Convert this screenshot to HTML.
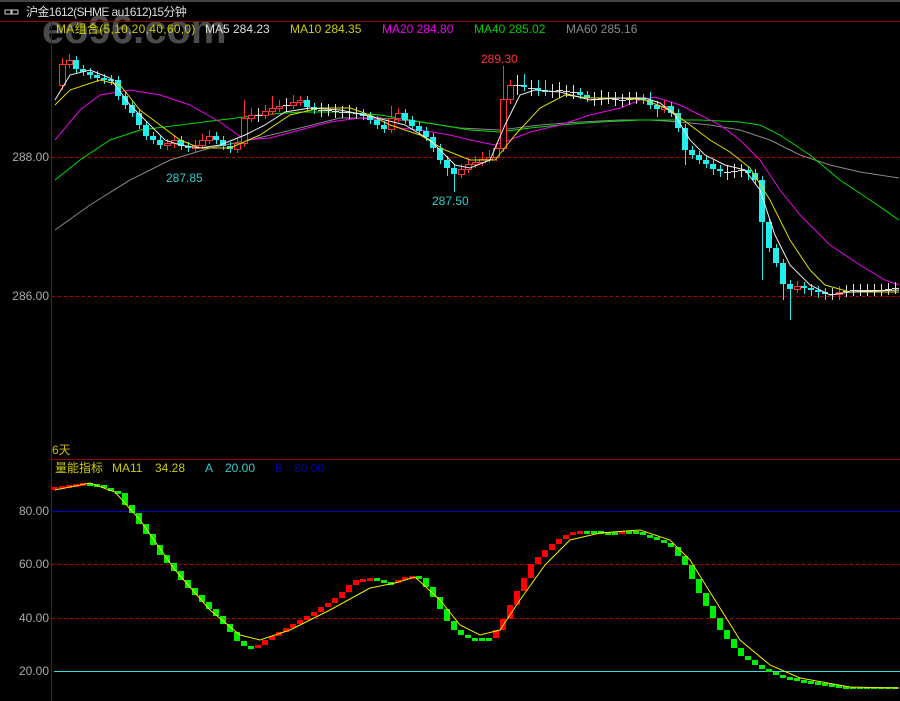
<!DOCTYPE html>
<html><head><meta charset="utf-8"><style>
body{margin:0;background:#000;width:900px;height:701px;overflow:hidden;font-family:"Liberation Sans","Noto Sans CJK SC",sans-serif;}
.t{position:absolute;white-space:nowrap;font-size:12px;line-height:14px}
</style></head><body>
<div style="position:absolute;left:0;top:0;width:900px;height:2px;background:#444"></div>
<div class="t" style="left:42px;top:10px;font-size:40px;line-height:40px;color:#4a4a4a;font-weight:bold">eo96.com</div>
<svg width="900" height="701" style="position:absolute;left:0;top:0">
<g stroke="#ccc" fill="none"><rect x="5" y="10" width="6" height="4"/><rect x="12" y="10" width="6" height="4"/></g>
<line x1="0" y1="21.5" x2="900" y2="21.5" stroke="#900"/>
<line x1="51.5" y1="21" x2="51.5" y2="701" stroke="#900"/>
<line x1="52" y1="459.5" x2="900" y2="459.5" stroke="#900"/>
<g stroke="#a00" stroke-dasharray="3,3"><line x1="52" y1="157.5" x2="900" y2="157.5"/><line x1="52" y1="296.5" x2="900" y2="296.5"/><line x1="52" y1="564.5" x2="900" y2="564.5"/><line x1="52" y1="618.5" x2="900" y2="618.5"/></g>
<line x1="52" y1="511.5" x2="900" y2="511.5" stroke="#0000c0"/>
<line x1="54" y1="671.5" x2="900" y2="671.5" stroke="#33dddd"/>
<g fill="none" stroke-width="1">
<polyline stroke="#888" points="55,230 90,205 130,180 170,160 210,148 250,140 300,128 340,118 380,118 420,122 460,128 500,130 540,125 580,122 620,120 650,120 680,122 710,125 740,130 770,140 800,155 830,165 860,172 899,178"/>
<polyline stroke="#0d0" points="55,180 80,160 110,140 140,130 180,125 220,120 260,115 300,112 340,112 380,115 410,120 440,125 470,130 500,132 530,128 560,125 600,122 640,120 670,120 700,120 740,122 760,125 780,135 810,155 840,180 870,200 899,220"/>
<polyline stroke="#e0e" points="55,140 80,110 100,95 130,90 160,95 190,105 220,122 245,140 270,138 300,130 330,122 360,118 380,120 400,128 420,130 450,135 470,140 495,145 510,140 530,132 560,125 590,115 620,108 640,100 655,97 680,105 700,115 720,125 740,140 760,160 780,190 800,215 830,245 860,265 885,280 899,285"/>
</g>
<path fill="none" stroke="#2ee" d="M76.5 56V73M83.5 65V76M90.5 68V79M97.5 71V82M104.5 74V84M111.5 75V85M118.5 76V100M125.5 92V109M132.5 101V117M139.5 109V129M146.5 121V140M153.5 132V144M160.5 136V149M181.5 136V150M188.5 142V152M216.5 132V144M223.5 136V150M230.5 142V153M307.5 96V111M314.5 103V114M363.5 109V120M370.5 112V124M377.5 116V129M384.5 121V133M405.5 109V124M412.5 116V130M419.5 122V135M426.5 127V141M433.5 133V152M440.5 144V164M447.5 156V176M454.5 164V192M524.5 74V91M538.5 80V96M545.5 80V96M580.5 88V99M587.5 91V102M643.5 94V104M650.5 92V109M657.5 101V117M671.5 102V117M678.5 109V132M685.5 124V165M692.5 146V159M699.5 151V164M706.5 156V168M713.5 160V175M720.5 165V177M748.5 166V180M755.5 169V184M762.5 176V280M769.5 218V252M776.5 244V267M783.5 259V300M790.5 280V320M804.5 282V294M811.5 284V296M818.5 286V298M825.5 288V300"/>
<path fill="#2ee" d="M73 60h6v9h-6zM80 69h6v3h-6zM87 72h6v3h-6zM94 75h6v3h-6zM101 78h6v2h-6zM108 79h6v2h-6zM115 80h6v16h-6zM122 96h6v9h-6zM129 105h6v8h-6zM136 113h6v12h-6zM143 125h6v11h-6zM150 136h6v4h-6zM157 140h6v5h-6zM178 140h6v6h-6zM185 146h6v2h-6zM213 136h6v4h-6zM220 140h6v6h-6zM227 146h6v3h-6zM304 100h6v7h-6zM311 107h6v3h-6zM360 113h6v3h-6zM367 116h6v4h-6zM374 120h6v5h-6zM381 125h6v4h-6zM402 113h6v7h-6zM409 120h6v6h-6zM416 126h6v5h-6zM423 131h6v6h-6zM430 137h6v11h-6zM437 148h6v12h-6zM444 160h6v8h-6zM451 168h6v6h-6zM521 85h6v2h-6zM535 88h6v2h-6zM542 90h6v2h-6zM577 92h6v3h-6zM584 95h6v3h-6zM640 98h6v2h-6zM647 100h6v5h-6zM654 105h6v4h-6zM668 106h6v7h-6zM675 113h6v15h-6zM682 128h6v22h-6zM689 150h6v5h-6zM696 155h6v5h-6zM703 160h6v4h-6zM710 164h6v5h-6zM717 169h6v2h-6zM745 170h6v3h-6zM752 173h6v7h-6zM759 180h6v42h-6zM766 222h6v26h-6zM773 248h6v15h-6zM780 263h6v21h-6zM787 284h6v5h-6zM801 286h6v2h-6zM808 288h6v2h-6zM815 290h6v2h-6zM822 292h6v2h-6z"/>
<path fill="none" stroke="#f33" d="M62.5 58V90M69.5 54V68M167.5 139V150M174.5 135V148M195.5 140V152M202.5 134V149M209.5 130V144M237.5 138V153M244.5 100V147M251.5 108V122M265.5 105V119M272.5 96V115M279.5 100V112M293.5 95V109M300.5 96V106M391.5 106V133M398.5 108V122M461.5 164V178M468.5 158V173M475.5 156V168M482.5 152V166M489.5 150V163M496.5 143V161M503.5 66V152M510.5 80V104M664.5 100V113M797.5 281V293M839.5 286V300"/>
<path fill="#000" stroke="#f33" d="M59.5 64.5h6v21h-6zM66.5 60.5h6v4h-6zM164.5 143.5h6v2h-6zM171.5 140.5h6v3h-6zM192.5 145.5h6v3h-6zM199.5 140.5h6v5h-6zM206.5 136.5h6v4h-6zM234.5 143.5h6v6h-6zM241.5 118.5h6v25h-6zM248.5 115.5h6v3h-6zM262.5 111.5h6v4h-6zM269.5 108.5h6v3h-6zM276.5 106.5h6v2h-6zM290.5 102.5h6v3h-6zM297.5 100.5h6v2h-6zM388.5 118.5h6v11h-6zM395.5 113.5h6v5h-6zM458.5 169.5h6v5h-6zM465.5 164.5h6v5h-6zM472.5 162.5h6v2h-6zM479.5 159.5h6v3h-6zM486.5 157.5h6v2h-6zM493.5 148.5h6v9h-6zM500.5 99.5h6v49h-6zM507.5 85.5h6v14h-6zM661.5 106.5h6v3h-6zM794.5 286.5h6v3h-6zM836.5 292.5h6v2h-6z"/>
<path fill="none" stroke="#ddd" d="M258.5 108V122M255 115.5h7M286.5 98V112M283 105.5h7M321.5 103V117M318 110.5h7M328.5 104V116M325 110.5h7M335.5 104V118M332 111.5h7M342.5 106V118M339 112.5h7M349.5 105V119M346 112.5h7M356.5 107V119M353 113.5h7M517.5 75V95M514 85.5h7M531.5 80V96M528 88.5h7M552.5 84V98M549 91.5h7M559.5 82V98M556 90.5h7M566.5 85V97M563 91.5h7M573.5 85V99M570 92.5h7M594.5 92V106M591 99.5h7M601.5 90V105M598 98.5h7M608.5 92V104M605 98.5h7M615.5 92V106M612 99.5h7M622.5 94V107M619 100.5h7M629.5 92V105M626 99.5h7M636.5 92V104M633 98.5h7M727.5 165V180M724 172.5h7M734.5 164V178M731 171.5h7M741.5 164V177M738 170.5h7M832.5 288V300M829 294.5h7M846.5 285V297M843 291.5h7M853.5 284V296M850 290.5h7M860.5 284V296M857 290.5h7M867.5 284V296M864 290.5h7M874.5 284V296M871 290.5h7M881.5 284V296M878 290.5h7M888.5 283V295M885 289.5h7M895.5 282V294M892 288.5h7"/>
<g fill="none" stroke-width="1">
<polyline stroke="#dd0" points="55,105 70,90 100,80 120,85 140,110 160,125 180,140 200,148 230,148 260,135 290,115 320,108 350,108 370,115 390,125 420,135 445,150 470,160 495,160 515,135 540,108 565,95 590,98 620,98 645,100 670,110 690,125 710,140 730,152 750,168 770,200 790,240 810,270 825,285 850,292 899,292"/>
<polyline stroke="#eee" points="55,100 70,75 90,70 110,78 130,105 150,125 165,140 180,145 200,148 220,145 245,135 265,125 285,112 310,108 340,110 365,115 385,120 405,125 430,140 455,165 470,168 490,160 505,125 520,95 535,90 560,92 590,100 620,98 645,98 660,103 675,115 690,140 705,155 725,165 745,170 760,190 775,235 790,265 810,285 830,295 850,292 899,290"/>
</g>
<path fill="#f00" d="M52 487h6v3h-6zM59 486h6v3h-6zM66 485h6v3h-6zM73 484h6v3h-6zM80 483h6v3h-6zM255 645h6v3h-6zM262 640h6v5h-6zM269 636h6v4h-6zM276 632h6v4h-6zM283 628h6v4h-6zM290 624h6v4h-6zM297 620h6v4h-6zM304 616h6v4h-6zM311 612h6v4h-6zM318 607h6v5h-6zM325 603h6v4h-6zM332 598h6v5h-6zM339 592h6v6h-6zM346 585h6v7h-6zM353 580h6v5h-6zM360 579h6v3h-6zM367 578h6v3h-6zM395 580h6v3h-6zM402 577h6v3h-6zM409 576h6v3h-6zM493 630h6v8h-6zM500 619h6v11h-6zM507 605h6v14h-6zM514 591h6v14h-6zM521 578h6v13h-6zM528 564h6v14h-6zM535 557h6v7h-6zM542 550h6v7h-6zM549 544h6v6h-6zM556 539h6v5h-6zM563 535h6v4h-6zM570 532h6v3h-6zM577 531h6v3h-6zM619 531h6v3h-6z"/>
<path fill="#0e0" d="M87 483h6v3h-6zM94 484h6v3h-6zM101 485h6v3h-6zM108 488h6v3h-6zM115 491h6v3h-6zM122 493h6v12h-6zM129 505h6v8h-6zM136 513h6v11h-6zM143 524h6v10h-6zM150 534h6v11h-6zM157 545h6v10h-6zM164 555h6v8h-6zM171 563h6v8h-6zM178 571h6v9h-6zM185 580h6v8h-6zM192 588h6v7h-6zM199 595h6v7h-6zM206 602h6v7h-6zM213 609h6v7h-6zM220 616h6v8h-6zM227 624h6v8h-6zM234 632h6v9h-6zM241 641h6v5h-6zM248 646h6v3h-6zM374 578h6v3h-6zM381 580h6v3h-6zM388 582h6v3h-6zM416 576h6v3h-6zM423 578h6v9h-6zM430 587h6v10h-6zM437 597h6v12h-6zM444 609h6v12h-6zM451 621h6v9h-6zM458 630h6v5h-6zM465 635h6v3h-6zM472 638h6v3h-6zM479 638h6v3h-6zM486 638h6v3h-6zM584 531h6v3h-6zM591 531h6v3h-6zM598 531h6v3h-6zM605 532h6v3h-6zM612 532h6v3h-6zM626 531h6v3h-6zM633 531h6v3h-6zM640 532h6v3h-6zM647 535h6v3h-6zM654 537h6v3h-6zM661 540h6v3h-6zM668 543h6v4h-6zM675 547h6v9h-6zM682 556h6v9h-6zM689 565h6v14h-6zM696 579h6v14h-6zM703 593h6v13h-6zM710 606h6v12h-6zM717 618h6v12h-6zM724 630h6v9h-6zM731 639h6v9h-6zM738 648h6v8h-6zM745 656h6v4h-6zM752 660h6v5h-6zM759 665h6v4h-6zM766 669h6v3h-6zM773 672h6v3h-6zM780 675h6v3h-6zM787 677h6v3h-6zM794 678h6v3h-6zM801 680h6v3h-6zM808 681h6v3h-6zM815 682h6v3h-6zM822 683h6v3h-6zM829 684h6v3h-6zM836 685h6v3h-6zM843 686h6v3h-6zM850 687h6v2h-6zM857 687h6v2h-6zM864 687h6v2h-6zM871 687h6v2h-6zM878 687h6v2h-6zM885 687h6v2h-6zM892 687h6v2h-6z"/>
<polyline fill="none" stroke="#ee0" points="55,490 90,483 115,492 140,520 175,570 210,610 240,635 260,640 290,630 330,610 370,588 395,583 415,577 440,600 460,625 480,635 500,630 520,600 545,565 570,540 600,533 640,530 670,540 690,560 715,600 740,640 770,665 800,678 850,687 899,688"/>
</svg>
<div class="t" style="left:26px;top:5px;color:#ddd;font-size:12px;letter-spacing:-0.6px">沪金1612(SHME au1612)15分钟</div>
<div class="t" style="left:56px;top:22px;color:#cc0;letter-spacing:0.3px">MA组合(5,10,20,40,60,0)</div>
<div class="t" style="left:205px;top:22px;color:#ddd">MA5 284.23</div>
<div class="t" style="left:290px;top:22px;color:#cc0">MA10 284.35</div>
<div class="t" style="left:382px;top:22px;color:#e0e">MA20 284.80</div>
<div class="t" style="left:474px;top:22px;color:#0c0">MA40 285.02</div>
<div class="t" style="left:566px;top:22px;color:#888">MA60 285.16</div>
<div class="t" style="left:0;width:49px;text-align:right;top:150px;color:#aaa">288.00</div>
<div class="t" style="left:0;width:49px;text-align:right;top:289px;color:#aaa">286.00</div>
<div class="t" style="left:0;width:49px;text-align:right;top:504px;color:#aaa">80.00</div>
<div class="t" style="left:0;width:49px;text-align:right;top:557px;color:#aaa">60.00</div>
<div class="t" style="left:0;width:49px;text-align:right;top:611px;color:#aaa">40.00</div>
<div class="t" style="left:0;width:49px;text-align:right;top:664px;color:#aaa">20.00</div>
<div class="t" style="left:481px;top:52px;color:#f33">289.30</div>
<div class="t" style="left:166px;top:171px;color:#3cc">287.85</div>
<div class="t" style="left:432px;top:194px;color:#3cc">287.50</div>
<div class="t" style="left:52px;top:443px;color:#cb0">6天</div>
<div class="t" style="left:55px;top:461px;color:#cc0">量能指标</div>
<div class="t" style="left:112px;top:461px;color:#cc0">MA11</div>
<div class="t" style="left:155px;top:461px;color:#cc0">34.28</div>
<div class="t" style="left:205px;top:461px;color:#3cc">A</div>
<div class="t" style="left:225px;top:461px;color:#3cc">20.00</div>
<div class="t" style="left:275px;top:461px;color:#00a">B</div>
<div class="t" style="left:294px;top:461px;color:#00a">80.00</div>
</body></html>
